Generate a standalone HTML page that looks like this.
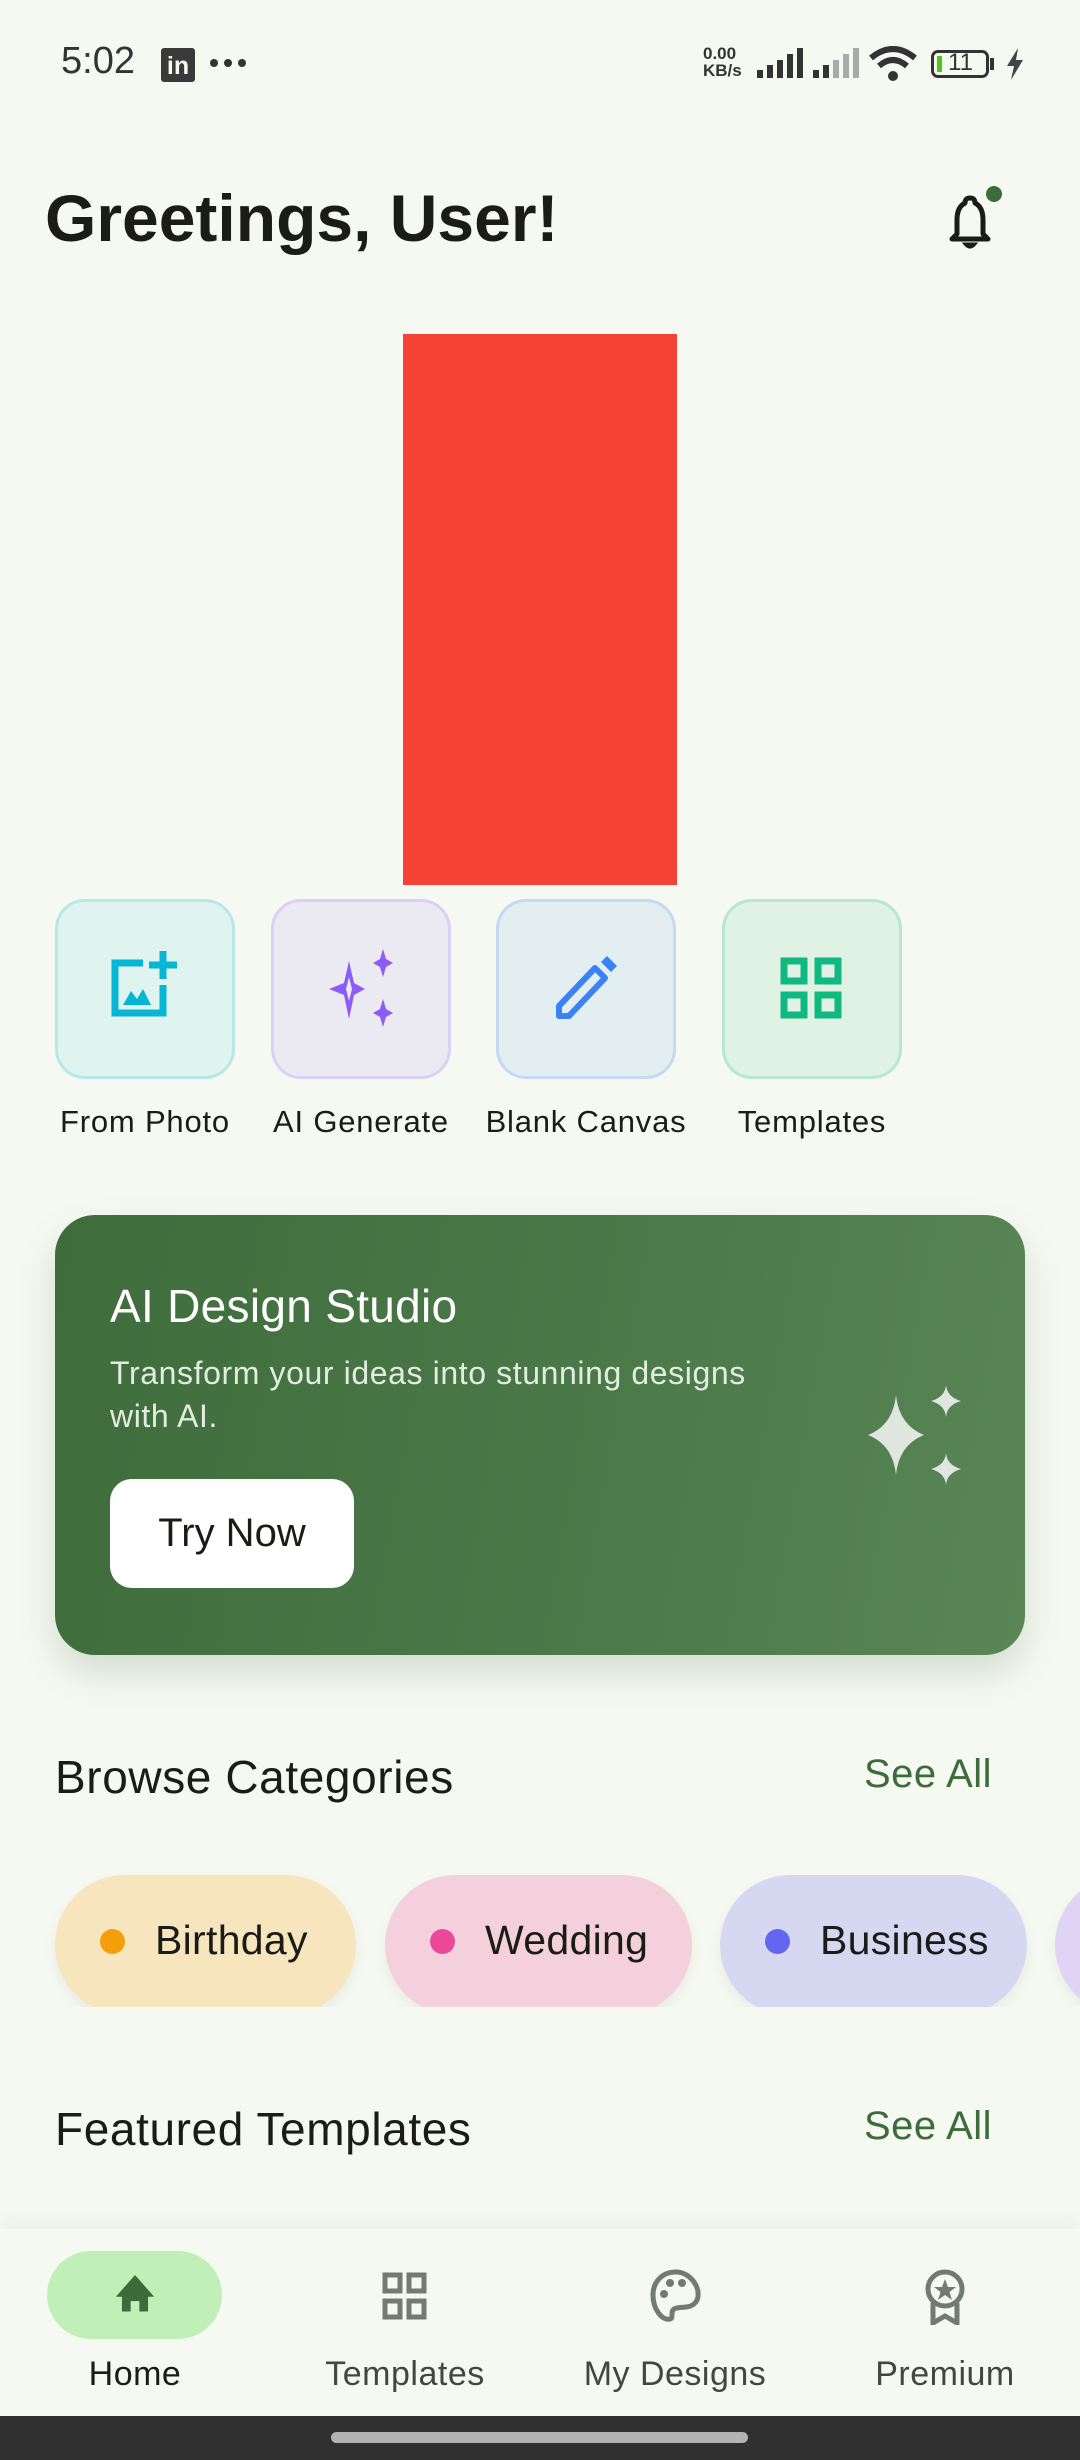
<!DOCTYPE html>
<html><head><meta charset="utf-8">
<style>
*{margin:0;padding:0;box-sizing:border-box}
body{width:1080px;height:2460px;background:#f6f9f1;font-family:"Liberation Sans",sans-serif;position:relative;overflow:hidden;color:#1b1c18}
.abs{position:absolute}
.tile{position:absolute;top:899px;width:180px;height:180px;border-radius:30px;border:3px solid}
.tile svg{position:absolute;left:50%;top:50%;transform:translate(-50%,-50%)}
.lbl{position:absolute;top:1104px;font-size:31px;width:240px;text-align:center;letter-spacing:0.8px}
.chip{position:absolute;top:1875px;height:140px;border-radius:70px;box-shadow:0 6px 14px rgba(0,0,0,0.06)}
.chip .dot{position:absolute;left:45px;top:54px;width:25px;height:25px;border-radius:50%}
.chip span{position:absolute;left:100px;top:42px;font-size:41px;letter-spacing:0.3px}
.nl{position:absolute;top:2355px;font-size:34px;width:270px;text-align:center;color:#43483f;letter-spacing:0.5px}
</style></head><body>
<!-- status bar -->
<div class="abs" style="left:61px;top:40px;font-size:38px;color:#333">5:02</div>
<div class="abs" style="left:161px;top:48px;width:34px;height:34px;background:#3a3a3a;border-radius:3px;color:#f6f9f1;font-weight:bold;font-size:25px;line-height:36px;text-align:center">in</div>
<div class="abs" style="left:210px;top:59px;width:8px;height:8px;border-radius:50%;background:#333"></div>
<div class="abs" style="left:224px;top:59px;width:8px;height:8px;border-radius:50%;background:#333"></div>
<div class="abs" style="left:238px;top:59px;width:8px;height:8px;border-radius:50%;background:#333"></div>
<div class="abs" style="left:703px;top:45px;font-size:17px;font-weight:bold;color:#333;line-height:17px">0.00<br>KB/s</div>
<svg class="abs" style="left:755px;top:48px" width="105" height="32">
<rect x="2" y="22" width="6" height="8" fill="#333"/><rect x="12" y="17" width="6" height="13" fill="#333"/><rect x="22" y="12" width="6" height="18" fill="#333"/><rect x="32" y="6" width="6" height="24" fill="#333"/><rect x="42" y="0" width="6" height="30" fill="#333"/>
<rect x="58" y="22" width="6" height="8" fill="#333"/><rect x="68" y="17" width="6" height="13" fill="#333"/><rect x="78" y="12" width="6" height="18" fill="#aaa"/><rect x="88" y="6" width="6" height="24" fill="#aaa"/><rect x="98" y="0" width="6" height="30" fill="#aaa"/>
</svg>
<svg class="abs" style="left:869px;top:46px" width="48" height="36" viewBox="0 0 48 36"><path d="M2 12 Q24 -6 46 12" stroke="#333" stroke-width="6" fill="none"/><path d="M10 20 Q24 8 38 20" stroke="#333" stroke-width="6" fill="none"/><circle cx="24" cy="30" r="5" fill="#333"/></svg>
<div class="abs" style="left:931px;top:50px;width:58px;height:28px;border:3px solid #333;border-radius:7px"></div>
<div class="abs" style="left:937px;top:56px;width:5px;height:16px;background:#52c41a"></div>
<div class="abs" style="left:948px;top:49px;font-size:24px;color:#333">11</div>
<div class="abs" style="left:990px;top:58px;width:4px;height:12px;background:#333"></div>
<svg class="abs" style="left:1005px;top:48px" width="20" height="32"><path d="M13 0 L2 18 H9 L6 32 L18 12 H11Z" fill="#444"/></svg>

<!-- header -->
<div class="abs" style="left:45px;top:180px;font-size:66px;font-weight:bold;letter-spacing:0px">Greetings, User!</div>
<svg class="abs" style="left:945px;top:192px" width="50" height="60" viewBox="0 0 50 60"><path d="M25 6 Q30 6 30 11 Q38 15 38 28 V42 L43 47 H7 L12 42 V28 Q12 15 20 11 Q20 6 25 6Z" fill="none" stroke="#1b1c18" stroke-width="5" stroke-linejoin="round"/><path d="M20 52 Q25 58 30 52Z" fill="#1b1c18" stroke="#1b1c18" stroke-width="3"/></svg>
<div class="abs" style="left:986px;top:186px;width:16px;height:16px;border-radius:50%;background:#3d6b3a"></div>

<div class="abs" style="left:403px;top:334px;width:274px;height:551px;background:#f44336"></div>

<!-- tiles -->
<div class="tile" style="left:55px;background:#dff4ee;border-color:#b5e9e8">
<svg width="76" height="76" viewBox="0 0 76 76"><path d="M36 12 H8 V62 H56 V34" fill="none" stroke="#06b6d4" stroke-width="7"/><path d="M56 0 V28 M42 14 H70" stroke="#06b6d4" stroke-width="7"/><path d="M16 54 L24 40 L30 48 L36 38 L44 54Z" fill="#06b6d4"/></svg></div>
<div class="tile" style="left:271px;background:#ebe9f1;border-color:#dcd0f4">
<svg width="76" height="80" viewBox="0 0 76 80"><path d="M26 12 L31 34 L42 40 L31 46 L26 70 L21 46 L6 40 L21 34Z M26 28 L23 40 L26 52 L29 40Z" fill="#8b5cf6" fill-rule="evenodd"/><path d="M60 0 L63 10 L70 14 L63 18 L60 28 L57 18 L50 14 L57 10Z" fill="#8b5cf6"/><path d="M60 50 L63 60 L70 64 L63 68 L60 78 L57 68 L50 64 L57 60Z" fill="#8b5cf6"/></svg></div>
<div class="tile" style="left:496px;background:#e3eef0;border-color:#c3d9f4">
<svg width="70" height="70" viewBox="0 0 70 70"><path d="M8 62 V52 L44 14 L54 24 L18 62Z" fill="none" stroke="#3b82f6" stroke-width="6" stroke-linejoin="round"/><path d="M50 8 L56 2 L66 12 L60 18Z" fill="#3b82f6"/></svg></div>
<div class="tile" style="left:722px;background:#dff2e4;border-color:#b5e8cf">
<svg width="64" height="64" viewBox="0 0 64 64"><g fill="none" stroke="#10b981" stroke-width="7"><rect x="4" y="4" width="20" height="20"/><rect x="38" y="4" width="20" height="20"/><rect x="4" y="38" width="20" height="20"/><rect x="38" y="38" width="20" height="20"/></g></svg></div>
<div class="lbl" style="left:25px">From Photo</div>
<div class="lbl" style="left:241px">AI Generate</div>
<div class="lbl" style="left:466px">Blank Canvas</div>
<div class="lbl" style="left:692px">Templates</div>

<!-- banner -->
<div class="abs" style="left:55px;top:1215px;width:970px;height:440px;border-radius:40px;background:linear-gradient(100deg,#3e6c3b,#4c7a4a 60%,#5a8657);box-shadow:0 18px 36px rgba(60,100,60,0.18)"></div>
<div class="abs" style="left:110px;top:1279px;font-size:46px;color:#fff;letter-spacing:0.3px">AI Design Studio</div>
<div class="abs" style="left:110px;top:1352px;font-size:32px;color:#e3ece1;line-height:43px;width:720px;letter-spacing:0.6px">Transform your ideas into stunning designs<br>with AI.</div>
<div class="abs" style="left:110px;top:1479px;width:244px;height:109px;border-radius:22px;background:#fff;font-size:40px;text-align:center;line-height:109px">Try Now</div>
<svg class="abs" style="left:864px;top:1385px" width="100" height="100" viewBox="0 0 100 100"><path d="M32 10 Q35 40 60 50 Q35 60 32 90 Q29 60 4 50 Q29 40 32 10Z" fill="#dfe6de"/><path d="M82 0 Q83 12 97 16 Q83 20 82 32 Q81 20 67 16 Q81 12 82 0Z" fill="#dfe6de"/><path d="M82 68 Q83 80 97 84 Q83 88 82 100 Q81 88 67 84 Q81 80 82 68Z" fill="#dfe6de"/></svg>

<!-- categories -->
<div class="abs" style="left:55px;top:1750px;font-size:46px;letter-spacing:0.6px">Browse Categories</div>
<div class="abs" style="left:864px;top:1752px;font-size:40px;color:#3d6b3a;letter-spacing:0.5px">See All</div>
<div class="abs" style="left:0;top:1860px;width:1080px;height:147px;overflow:hidden">
<div class="chip" style="top:15px;left:55px;width:301px;background:#f6e5bd"><div class="dot" style="background:#f59e0b"></div><span>Birthday</span></div>
<div class="chip" style="top:15px;left:385px;width:307px;background:#f4d0dc"><div class="dot" style="background:#ec4899"></div><span>Wedding</span></div>
<div class="chip" style="top:15px;left:720px;width:307px;background:#d6d8f2"><div class="dot" style="background:#6366f1"></div><span>Business</span></div>
<div class="chip" style="top:15px;left:1055px;width:300px;background:#e0d4f4"></div>
</div>

<div class="abs" style="left:55px;top:2102px;font-size:46px;letter-spacing:0.6px">Featured Templates</div>
<div class="abs" style="left:864px;top:2104px;font-size:40px;color:#3d6b3a;letter-spacing:0.5px">See All</div>

<!-- bottom nav -->
<div class="abs" style="left:0;top:2229px;width:1080px;height:187px;background:#f6f9f1;box-shadow:0 -8px 16px rgba(0,0,0,0.04)"></div>
<div class="abs" style="left:47px;top:2251px;width:175px;height:88px;border-radius:44px;background:#c0f0b8"></div>
<svg class="abs" style="left:115px;top:2274px" width="40" height="42" viewBox="0 0 46 46"><path d="M23 0 L45 25 H38 V42 H28 V30 H18 V42 H8 V25 H1Z" fill="#3d6b3a"/></svg>
<svg class="abs" style="left:382px;top:2272px" width="46" height="48" viewBox="0 0 46 48"><g fill="none" stroke="#737b70" stroke-width="5"><rect x="3" y="3" width="15" height="16"/><rect x="27" y="3" width="15" height="16"/><rect x="3" y="29" width="15" height="16"/><rect x="27" y="29" width="15" height="16"/></g></svg>
<svg class="abs" style="left:650px;top:2269px" width="52" height="54" viewBox="0 0 52 54"><path d="M26 3 C11 3 3 14 3 26 C3 40 12 52 20 50 C24 49 20 43 24 40 C28 37 38 40 44 35 C50 30 49 20 44 13 C39 6 32 3 26 3Z" fill="none" stroke="#737b70" stroke-width="5"/><circle cx="14" cy="25" r="4" fill="#737b70"/><circle cx="20" cy="14" r="4" fill="#737b70"/><circle cx="32" cy="14" r="4" fill="#737b70"/></svg>
<svg class="abs" style="left:924px;top:2269px" width="42" height="56" viewBox="0 0 42 56"><circle cx="21" cy="20" r="17" fill="none" stroke="#737b70" stroke-width="5"/><path d="M21 10 L24 18 L32 18 L25.5 23 L28 31 L21 26 L14 31 L16.5 23 L10 18 L18 18Z" fill="#737b70"/><path d="M9 34 V54 L21 47 L33 54 V34" fill="none" stroke="#737b70" stroke-width="5"/></svg>
<div class="nl" style="left:0;color:#1b1c18">Home</div>
<div class="nl" style="left:270px">Templates</div>
<div class="nl" style="left:540px">My Designs</div>
<div class="nl" style="left:810px">Premium</div>

<div class="abs" style="left:0;top:2416px;width:1080px;height:44px;background:#303030"></div>
<div class="abs" style="left:331px;top:2432px;width:417px;height:11px;border-radius:6px;background:#b3b3b3"></div>
</body></html>
